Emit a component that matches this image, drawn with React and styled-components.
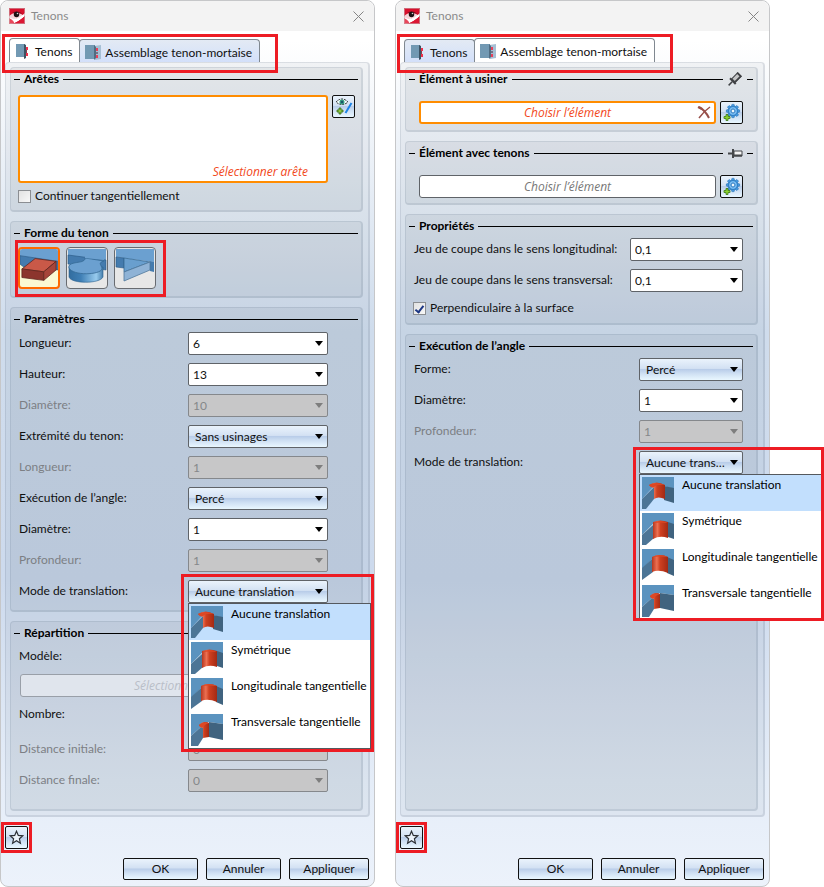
import React from 'react';
import styled, { createGlobalStyle, css } from 'styled-components';

const color = {
  text: '#101010',
  muted: '#7c7f84',
  orange: '#ff8c00',
  prompt: '#f2481b',
  callout: '#ed1c24',
  border: '#5f6368',
};

const glossy = 'linear-gradient(#eaf3fc, #d3e1f3 45%, #b9cde9 50%, #cfe0f3 70%, #e9f7ff)';
const italicFont = "'Open Sans', 'Noto Sans', sans-serif";

const GlobalStyle = createGlobalStyle`
  *, *::before, *::after { box-sizing: border-box; }

  body {
    margin: 0;
    background: #fff;
    color: ${color.text};
    font-family: Lato, 'Open Sans', sans-serif;
    font-size: 12px;
    line-height: 16px;
  }

  button, input, select, textarea {
    margin: 0;
    color: inherit;
    font: inherit;
  }
`;

const Page = styled.main`
  display: grid;
  grid-template-columns: 1fr 1fr;
  gap: 20px;
  min-height: 100vh;
  padding-right: 54px;
`;

const Window = styled.section`
  display: flex;
  flex-direction: column;
  min-width: 0;
  border: 1px solid #c6c7c9;
  border-radius: 8px;
  background: linear-gradient(#fff 40px, #cfdcec 330px, #cddaed 580px, #e5edf8 780px, #ecf2fb);
`;

const TitleBar = styled.header`
  display: flex;
  align-items: center;
  gap: 6px;
  height: 30px;
  padding: 0 8px;
  border-radius: 8px 8px 0 0;
  background: #f3f3f3;
  color: #8b8b8b;
`;

const WindowTitle = styled.h1`
  flex: 1;
  margin: 0;
  font-size: 12px;
  font-weight: 400;
`;

const CloseButton = styled.button`
  display: flex;
  padding: 2px;
  border: 0;
  background: none;
`;

/* Red frame drawn over the part being pointed out. */
const Callout = styled.span`
  position: absolute;
  z-index: 3;
  inset: ${props => props.$inset};
  border: 3px solid ${color.callout};
  pointer-events: none;
`;

const Tabs = styled.div`
  position: relative;
  display: flex;
  align-items: flex-end;
  align-self: flex-start;
  height: 24px;
  margin: 7px 0 0 8px;
`;

const Tab = styled.button`
  display: flex;
  align-items: center;
  gap: 4px;
  height: ${props => (props.$active ? 24 : 23)}px;
  padding: 3px 7px 0 5px;
  border: 1px solid #808890;
  border-bottom: 0;
  border-radius: 4px 4px 0 0;
  background: ${props => (props.$active ? '#fff' : 'linear-gradient(#e3eaf4, #d3e0fa)')};
  white-space: nowrap;

  & + & {
    margin-left: -1px;
  }
`;

const Panel = styled.div`
  display: flex;
  flex: 1;
  flex-direction: column;
  gap: 9px;
  margin: 0 4px;
  padding: 4px 5px 4px 4px;
  border: solid rgba(60, 75, 100, 0.12);
  border-width: 1px 2px 2px 1px;
  border-radius: 4px;
  background: rgba(70, 85, 110, 0.06);
`;

const GroupBox = styled.section`
  flex: ${props => (props.$fill ? '1 0 auto' : 'none')};
  padding-top: 3px;
  border: solid rgba(60, 80, 105, 0.12);
  border-width: 1px 2px 2px 1px;
  border-radius: 4px;
  background: rgba(80, 85, 100, 0.08);
`;

const GroupHeader = styled.div`
  display: flex;
  align-items: center;
  gap: 4px;
  height: 16px;
  padding: 0 3px;
`;

const GroupTitle = styled.h2`
  margin: 0;
  font-size: 12px;
  font-weight: 700;
  color: #000;
`;

const Rule = styled.span`
  flex: ${props => (props.$short ? '0 0 6px' : 1)};
  height: 1px;
  background: #000;
`;

const GroupBody = styled.div`
  display: flex;
  flex-direction: column;
  gap: ${props => props.$gap || 8}px;
  padding: ${props => props.$pad};
`;

const Row = styled.div`
  display: flex;
  align-items: center;
  gap: 4px;
  min-height: 23px;
  padding: ${props => props.$pad || 0};
`;

const FieldLabel = styled.label`
  flex: 1;
  padding: 0 0 2px 1px;
  color: ${props => (props.$disabled ? color.muted : 'inherit')};
  white-space: nowrap;
`;

const SelectWrap = styled.div`
  position: relative;
  flex: 0 0 ${props => props.$width}px;

  &::after {
    position: absolute;
    top: 9px;
    right: 5px;
    border: solid transparent;
    border-width: 5px 4px 0;
    border-top-color: ${props => (props.$disabled ? '#7e7e7e' : '#000')};
    content: '';
    pointer-events: none;
  }
`;

const StyledSelect = styled.select`
  display: block;
  width: 100%;
  height: 23px;
  padding: 1px 17px 0 4px;
  overflow: hidden;
  appearance: none;
  border: 1px solid ${color.border};
  border-radius: 2px;
  background: #fff;
  text-overflow: ellipsis;
  white-space: nowrap;

  ${props =>
    props.$glossy &&
    css`
      padding-left: 6px;
      background: ${glossy};
    `}

  &:disabled {
    border-color: #85888c;
    background: #c7c7c8;
    color: #85878a;
    opacity: 1;
  }
`;

const Popup = styled.ul`
  position: absolute;
  z-index: 2;
  top: 23px;
  left: 0;
  width: 183px;
  margin: 0;
  padding: 0;
  border: 1px solid #55595e;
  background: #fff;
  list-style: none;
`;

const PopupItem = styled.li`
  display: flex;
  gap: 8px;
  height: 36px;
  padding: 2px;
  background: ${props => (props.$selected ? '#c2dffd' : '#fff')};
  color: #000;
  white-space: nowrap;

  svg {
    flex: none;
  }
`;

const PickArea = styled.textarea`
  flex: 1;
  min-width: 0;
  height: 88px;
  padding: 67px 18px 0;
  overflow: hidden;
  resize: none;
  border: 2px solid ${color.orange};
  border-radius: 3px;
  background: #fff;
  font-family: ${italicFont};
  text-align: right;

  &::placeholder {
    color: ${color.prompt};
    font-style: italic;
    opacity: 1;
  }
`;

const PickField = styled.div`
  position: relative;
  display: flex;
  flex: 1;
  min-width: 0;
`;

const PickInput = styled.input`
  flex: 1;
  min-width: 0;
  height: 23px;
  padding: 0 4px;
  border: 1px solid ${color.border};
  border-radius: 3px;
  background: #fff;
  font-family: ${italicFont};
  text-align: center;

  &::placeholder {
    color: #777;
    font-style: italic;
    opacity: 1;
  }

  ${props =>
    props.$active &&
    css`
      border: 2px solid ${color.orange};

      &::placeholder {
        color: ${color.prompt};
      }
    `}

  &:disabled {
    border-color: #999fa8;
    background: #e0e5ed;

    &::placeholder {
      color: #b9bec8;
    }
  }
`;

const ClearButton = styled.button`
  position: absolute;
  top: 4px;
  right: 4px;
  display: flex;
  padding: 0;
  border: 0;
  background: none;
`;

const IconButton = styled.button`
  display: flex;
  flex: none;
  align-items: center;
  align-self: flex-start;
  justify-content: center;
  width: 23px;
  height: 23px;
  padding: 0;
  border: 1px solid #111;
  border-radius: 2px;
  background: ${glossy};
`;

const CheckRow = styled.label`
  display: flex;
  align-items: center;
  gap: 4px;
  min-height: 16px;
`;

const CheckBox = styled.input`
  display: grid;
  place-content: center;
  width: 13px;
  height: 13px;
  appearance: none;
  border: 1px solid #8b8e92;
  background: linear-gradient(135deg, #e2e2e2, #f8f8f8);

  &:checked::before {
    width: 5px;
    height: 9px;
    border: solid #1c3684;
    border-width: 0 2px 2px 0;
    content: '';
    transform: rotate(38deg);
  }
`;

const Shapes = styled.div`
  position: relative;
  display: flex;
  align-self: flex-start;
  gap: 6px;
`;

const ShapeButton = styled.button`
  display: flex;
  width: 42px;
  height: 42px;
  padding: 0;
  overflow: hidden;
  border: ${props => (props.$selected ? '2px solid #ff6a00' : '1px solid #686b70')};
  border-radius: 4px;
  background: ${props => (props.$selected ? '#fbf9d2' : '#e7e7e7')};

  svg {
    width: 100%;
    height: 100%;
  }
`;

const Bookmark = styled.div`
  position: relative;
  align-self: flex-start;
  margin: 9px 0 0 4px;
`;

const Actions = styled.footer`
  display: flex;
  justify-content: flex-end;
  gap: 8px;
  padding: 9px 5px 6px;
`;

const ActionButton = styled.button`
  width: ${props => (props.$wide ? 80 : 75)}px;
  height: 22px;
  padding: 0;
  border: 1px solid #111;
  border-radius: 2px;
  background: ${glossy};
`;

const AppIcon = () => (
  <svg width="16" height="16" viewBox="0 0 16 16" aria-hidden="true">
    <rect width="16" height="16" fill="#d80f2c" />
    <path d="M0 8Q3 5 7 5Q12 5 15 8Q9 10 4 12L0 10Z" fill="#f6d3d8" />
    <path d="M3 5Q8 1 14 6Q8 4 3 5Z" fill="#7d1422" />
    <circle cx="7.500" cy="6.500" r="2.700" fill="#1c1113" />
    <circle cx="8.500" cy="5.500" r=".8" fill="#d8d8d8" />
    <path d="M0 9Q3 11 5 11Q11 10 16 5V8Q11 13 3 16H0Z" fill="#fff" />
    <path d="M0 10Q6 13 5 16H0Z" fill="#e9465a" />
    <path d="M3 16Q11 13 16 8V16Z" fill="#dc1733" />
    <rect x=".5" y=".5" width="15" height="15" fill="none" stroke="#c9a5aa" opacity=".6" />
  </svg>
);

const CloseIcon = () => (
  <svg width="11" height="11" viewBox="0 0 11 11" stroke="#858585" aria-hidden="true">
    <path d="M.5.5l10 10M10.5.5l-10 10" />
  </svg>
);

const TenonIcon = () => (
  <svg width="16" height="16" viewBox="0 0 16 16" aria-hidden="true">
    <path d="M1 0h9v13H1z" fill="#7299b3" />
    <path d="M9 0l2 1v13l-2 1z" fill="#3d5263" />
    <path d="M11 3h2v3h-2zM11 9h2v3h-2z" fill="#f0304a" />
    <path d="M11 6h1v3h-1z" fill="#82414f" />
  </svg>
);

const MortiseIcon = () => (
  <svg width="16" height="16" viewBox="0 0 16 16" aria-hidden="true">
    <path d="M0 0h10v14H0z" fill="#7299b3" />
    <path d="M9 1l7-1v14l-6 1z" fill="#a6bfd4" />
    <path d="M9 0l2 2v11l-2 2z" fill="#506c82" />
    <path d="M11 3h2v3h-2zM11 10h2v3h-2z" fill="#e8405a" />
    <path d="M11 7h2v2h-2z" fill="#777287" />
  </svg>
);

const EdgeIcon = () => (
  <svg width="19" height="19" viewBox="0 0 19 19" aria-hidden="true">
    <path d="M2 5Q8-1 14 5Q8 10 2 5Z" fill="#f4ffff" stroke="#222" strokeDasharray="2 1" />
    <circle cx="8" cy="5" r="2.5" fill="#32977d" />
    <circle cx="8" cy="5" r="1" fill="#123c64" />
    <path
      d="M5 11h2v2h2v2H7v2H5v-2H3v-2h2z"
      fill="#8dc63f"
      stroke="#34691b"
      strokeWidth=".8"
    />
    <path d="M17.500 6l-6 10" stroke="#1d83e5" strokeWidth="2" />
  </svg>
);

const gearTeeth = [0, 45, 90, 135, 180, 225, 270, 315];

const GearIcon = () => (
  <svg width="19" height="19" viewBox="0 0 19 19" aria-hidden="true">
    <g fill="#4d9fe4" stroke="#2271b8" strokeWidth=".7">
      {gearTeeth.map(angle => (
        <rect
          key={angle}
          x="9.700"
          y="1.400"
          width="2.600"
          height="3"
          rx=".6"
          transform={`rotate(${angle} 11 8)`}
        />
      ))}
      <circle cx="11" cy="8" r="4.700" />
    </g>
    <circle cx="11" cy="8" r="3.200" fill="none" stroke="#8cc6f3" />
    <circle cx="11" cy="8" r="1.900" fill="#eef6fb" stroke="#2573bb" strokeWidth=".8" />
    <path
      d="M4 11.500h2v2h2v2H6v2H4v-2H2v-2h2z"
      fill="#8bd130"
      stroke="#3c7a18"
      strokeWidth=".8"
    />
  </svg>
);

const ClearIcon = () => (
  <svg width="15" height="15" viewBox="0 0 15 15" fill="none" stroke="#98504a" aria-hidden="true">
    <path d="M2 2Q8 5 12 13" strokeWidth="2" />
    <path d="M13 2Q7 6 2 13" strokeWidth="1.500" />
    <path d="M1 2l4 2" strokeWidth="2" />
  </svg>
);

const PinIcon = ({ fixed }) => (
  <svg width="16" height="16" viewBox="0 0 16 16" overflow="visible" aria-hidden="true">
    {fixed ? (
      <g stroke="#45474a">
        <path d="M1 8.500h4" strokeWidth="2" />
        <path d="M6 4v9" strokeWidth="2" />
        <path d="M7 6h8v5H7z" fill="#f4f4f4" />
        <path d="M7 10.500h8" strokeWidth="2" />
      </g>
    ) : (
      <g stroke="#3f4144" transform="rotate(-45 8 8)">
        <path d="M-1 8h5" strokeWidth="1.500" />
        <path d="M5 4v8" strokeWidth="2" />
        <path d="M6 5.500h8v5H6z" fill="#c4c5c6" />
        <path d="M6 10h8" strokeWidth="1.500" />
        <path d="M14 5v6" strokeWidth="2" />
      </g>
    )}
  </svg>
);

const StarIcon = () => (
  <svg width="15" height="15" viewBox="0 0 15 15" aria-hidden="true">
    <path
      d="M7.500 1.200l1.800 4.200 4.500.4-3.400 3 1 4.400-3.900-2.400-3.900 2.400 1-4.400-3.400-3 4.500-.4z"
      fill="#edf4fb"
      stroke="#2b2f35"
      strokeWidth="1.200"
    />
  </svg>
);

const BlockShape = () => (
  <svg viewBox="0 0 40 40" aria-hidden="true">
    <path d="M0 0h40v13L0 8z" fill="#6ba0d0" />
    <path d="M0 7l40 6v9H8L0 16z" fill="#447bae" stroke="#275581" strokeWidth=".6" />
    <path d="M16 10l22 3-13 11-23-3z" fill="#c95948" stroke="#5e241d" strokeWidth=".8" />
    <path d="M2 21l23 3v9L2 30z" fill="#8c352d" stroke="#5e241d" strokeWidth=".8" />
    <path d="M25 24l13-11v9L25 33z" fill="#a6453a" stroke="#5e241d" strokeWidth=".8" />
  </svg>
);

const RoundShape = () => (
  <svg viewBox="0 0 40 40" aria-hidden="true">
    <defs>
      <linearGradient id="round-side">
        <stop offset="0" stopColor="#326d9f" />
        <stop offset=".35" stopColor="#3f7fb5" />
        <stop offset=".8" stopColor="#98cbee" />
        <stop offset="1" stopColor="#447eac" />
      </linearGradient>
    </defs>
    <path d="M1 1h38v11L1 8z" fill="#6ba0d0" />
    <path d="M1 7l38 5v10L1 16z" fill="#447bae" stroke="#275581" strokeWidth=".6" />
    <path d="M2 19v10c2 7 31 7 34 0V19z" fill="url(#round-side)" stroke="#2b608c" strokeWidth=".6" />
    <path
      d="M18 10l19 3c-7 2-2 4-2 8-2 6-29 7-33-1-2-6 11-5 14-7 2-1 2-2 2-3z"
      fill="#6ba0d0"
      stroke="#356994"
      strokeWidth=".8"
    />
    <path d="M18 3h19v9l-19-2z" fill="#6ba0d0" />
  </svg>
);

const DovetailShape = () => (
  <svg viewBox="0 0 40 40" aria-hidden="true">
    <path d="M1 1h38v13L1 9z" fill="#6ba0d0" />
    <path d="M1 9l8 1v10l-8-1z" fill="#447bae" stroke="#275581" strokeWidth=".6" />
    <path d="M35 13l4 1v10l-4-1z" fill="#447bae" />
    <path d="M9 10l26 4L9 24z" fill="#699fce" stroke="#356994" strokeWidth=".8" />
    <path d="M9 24l26-10v8L9 33z" fill="#8fb3d6" stroke="#4f779b" strokeWidth=".8" />
  </svg>
);

const notches = {
  none: {
    top: 'M0 0H32V12L22 9H12L0 22Z',
    left: 'M0 22L12 10V22L4 32H0Z',
    right: 'M22 9l10 2v15l-10-3z',
    pin: 'M7 8Q14 3 23 8V22Q16 19 12 22V11Q9 11 7 8Z',
    cap: 'M7 8Q14 4 23 8Q15 7 12 10Q9 11 7 8Z',
  },
  symmetric: {
    top: 'M0 0H32V12L26 10H12L0 22Z',
    left: 'M0 22L12 11V25L4 32H0Z',
    right: 'M26 9l6 2v15l-6-2z',
    pin: 'M11 9Q18 6 26 9V25Q18 22 11 26Z',
    cap: 'M11 10Q18 6 26 10Q18 9 11 10Z',
  },
  longitudinal: {
    top: 'M0 0H32V12L25 9H11L0 20Z',
    left: 'M0 19L11 9V23L0 31Z',
    right: 'M25 8l7 3v16l-7-3z',
    pin: 'M10 8Q18 4 26 8V24Q17 20 10 23Z',
    cap: 'M10 8Q18 4 26 8Q18 7 10 8Z',
  },
  transversal: {
    top: 'M0 0H32V10L18 8L12 11L0 22Z',
    left: 'M0 22L12 11V24L7 32H0Z',
    right: 'M18 8l14 2v16l-14-3z',
    pin: 'M8 11Q12 6 18 9V23L12 24V14Q9 14 8 11Z',
    cap: 'M8 11Q12 7 18 9Q14 10 12 13Q9 14 8 11Z',
  },
};

const NotchIcon = ({ kind }) => {
  const { top, left, right, pin, cap } = notches[kind];

  return (
    <svg width="32" height="32" viewBox="0 0 32 32" aria-hidden="true">
      <defs>
        <linearGradient id="notch-pin">
          <stop offset="0" stopColor="#b8371f" />
          <stop offset=".3" stopColor="#ec7052" />
          <stop offset=".5" stopColor="#cf4020" />
          <stop offset="1" stopColor="#a32a14" />
        </linearGradient>
      </defs>
      <path d={top} fill="#5b93bf" />
      <path d={left} fill="#4c7596" />
      <path d={right} fill="#40637f" />
      <path d={pin} fill="url(#notch-pin)" />
      <path d={cap} fill="#dd4825" />
    </svg>
  );
};

const translationModes = [
  { kind: 'none', label: 'Aucune translation' },
  { kind: 'symmetric', label: 'Symétrique' },
  { kind: 'longitudinal', label: 'Longitudinale tangentielle' },
  { kind: 'transversal', label: 'Transversale tangentielle' },
];

const Group = ({ title, pin, fill, pad, gap, children }) => (
  <GroupBox $fill={fill}>
    <GroupHeader>
      <Rule $short />
      <GroupTitle>{title}</GroupTitle>
      <Rule />
      {pin && <PinIcon fixed={pin === 'fixed'} />}
      {pin && <Rule $short />}
    </GroupHeader>
    <GroupBody $pad={pad} $gap={gap}>
      {children}
    </GroupBody>
  </GroupBox>
);

const SelectRow = ({ id, label, value, width, disabled, glossy: isGlossy, pad, children }) => (
  <Row $pad={pad}>
    <FieldLabel htmlFor={id} $disabled={disabled}>
      {label}
    </FieldLabel>
    <SelectWrap $width={width} $disabled={disabled}>
      <StyledSelect id={id} disabled={disabled} $glossy={isGlossy}>
        <option>{value}</option>
      </StyledSelect>
      {children}
    </SelectWrap>
  </Row>
);

const TranslationRow = ({ id, width, calloutInset }) => (
  <SelectRow
    id={id}
    label="Mode de translation:"
    value={translationModes[0].label}
    width={width}
    glossy
  >
    <Popup role="listbox" aria-label="Mode de translation">
      {translationModes.map(({ kind, label }, index) => (
        <PopupItem key={kind} role="option" aria-selected={index === 0} $selected={index === 0}>
          <NotchIcon kind={kind} />
          {label}
        </PopupItem>
      ))}
    </Popup>
    <Callout $inset={calloutInset} />
  </SelectRow>
);

const Dialog = ({ activeTab, children }) => (
  <Window>
    <TitleBar>
      <AppIcon />
      <WindowTitle>Tenons</WindowTitle>
      <CloseButton aria-label="Fermer">
        <CloseIcon />
      </CloseButton>
    </TitleBar>
    <Tabs role="tablist">
      <Tab role="tab" aria-selected={activeTab === 0} $active={activeTab === 0}>
        <TenonIcon />
        Tenons
      </Tab>
      <Tab role="tab" aria-selected={activeTab === 1} $active={activeTab === 1}>
        <MortiseIcon />
        Assemblage tenon-mortaise
      </Tab>
      <Callout $inset="-4px -18px -11px -7px" />
    </Tabs>
    <Panel>{children}</Panel>
    <Bookmark>
      <IconButton aria-label="Favoris">
        <StarIcon />
      </IconButton>
      <Callout $inset="-4px" />
    </Bookmark>
    <Actions>
      <ActionButton>OK</ActionButton>
      <ActionButton>Annuler</ActionButton>
      <ActionButton $wide>Appliquer</ActionButton>
    </Actions>
  </Window>
);

const parameters = [
  { id: 'length', label: 'Longueur:', value: '6' },
  { id: 'height', label: 'Hauteur:', value: '13' },
  { id: 'diameter', label: 'Diamètre:', value: '10', disabled: true },
  { id: 'tenon-end', label: 'Extrémité du tenon:', value: 'Sans usinages', glossy: true },
  { id: 'end-length', label: 'Longueur:', value: '1', disabled: true },
  { id: 'corner', label: 'Exécution de l’angle:', value: 'Percé', glossy: true },
  { id: 'corner-diameter', label: 'Diamètre:', value: '1' },
  { id: 'corner-depth', label: 'Profondeur:', value: '1', disabled: true },
];

const TenonDialog = () => (
  <Dialog activeTab={0}>
    <Group title="Arêtes" pad="8px 6px 6px 7px" gap={5}>
      <Row>
        <PickArea aria-label="Arêtes" placeholder="Sélectionner arête" />
        <IconButton aria-label="Ajouter une arête">
          <EdgeIcon />
        </IconButton>
      </Row>
      <CheckRow>
        <CheckBox type="checkbox" />
        Continuer tangentiellement
      </CheckRow>
    </Group>
    <Group title="Forme du tenon" pad="6px 6px 7px 7px">
      <Shapes>
        <ShapeButton aria-label="Rectangulaire" $selected>
          <BlockShape />
        </ShapeButton>
        <ShapeButton aria-label="Arrondi">
          <RoundShape />
        </ShapeButton>
        <ShapeButton aria-label="Queue d’aronde">
          <DovetailShape />
        </ShapeButton>
        <Callout $inset="-7px -10px -8px -3px" />
      </Shapes>
    </Group>
    <Group title="Paramètres" pad="5px 33px 7px 7px">
      {parameters.map(parameter => (
        <SelectRow key={parameter.id} width={140} {...parameter} />
      ))}
      <TranslationRow id="translation" width={140} calloutInset="-6px -46px -149px -7px" />
    </Group>
    <Group title="Répartition" pad="4px 6px 16px 7px" gap={6} fill>
      <Row>
        <FieldLabel htmlFor="model">Modèle:</FieldLabel>
      </Row>
      <Row $pad="0 0 0 2px">
        <PickInput id="model" placeholder="Sélectionner modèle" disabled />
      </Row>
      <SelectRow id="count" label="Nombre:" value="1" width={140} pad="0 27px 0 0" />
      <SelectRow
        id="start-distance"
        label="Distance initiale:"
        value="0"
        width={140}
        pad="6px 27px 0 0"
        disabled
      />
      <SelectRow
        id="end-distance"
        label="Distance finale:"
        value="0"
        width={140}
        pad="2px 27px 0 0"
        disabled
      />
    </Group>
  </Dialog>
);

const MortiseDialog = () => (
  <Dialog activeTab={1}>
    <Group title="Élément à usiner" pin="loose" pad="14px 13px 6px">
      <Row>
        <PickField>
          <PickInput aria-label="Élément à usiner" placeholder="Choisir l’élément" $active />
          <ClearButton aria-label="Effacer">
            <ClearIcon />
          </ClearButton>
        </PickField>
        <IconButton aria-label="Ajouter l’élément à usiner">
          <GearIcon />
        </IconButton>
      </Row>
    </Group>
    <Group title="Élément avec tenons" pin="fixed" pad="14px 13px 5px">
      <Row>
        <PickField>
          <PickInput aria-label="Élément avec tenons" placeholder="Choisir l’élément" />
        </PickField>
        <IconButton aria-label="Ajouter l’élément avec tenons">
          <GearIcon />
        </IconButton>
      </Row>
    </Group>
    <Group title="Propriétés" pad="4px 13px 7px 7px">
      <SelectRow
        id="lengthwise"
        label="Jeu de coupe dans le sens longitudinal:"
        value="0,1"
        width={113}
      />
      <SelectRow
        id="crosswise"
        label="Jeu de coupe dans le sens transversal:"
        value="0,1"
        width={113}
      />
      <CheckRow>
        <CheckBox type="checkbox" defaultChecked />
        Perpendiculaire à la surface
      </CheckRow>
    </Group>
    <Group title="Exécution de l’angle" pad="4px 13px 7px 7px" fill>
      <SelectRow id="shape" label="Forme:" value="Percé" width={104} glossy />
      <SelectRow id="hole-diameter" label="Diamètre:" value="1" width={104} />
      <SelectRow id="hole-depth" label="Profondeur:" value="1" width={104} disabled />
      <TranslationRow id="mortise-translation" width={104} calloutInset="-4px -81px -147px -6px" />
    </Group>
  </Dialog>
);

const App = () => (
  <>
    <GlobalStyle />
    <Page>
      <TenonDialog />
      <MortiseDialog />
    </Page>
  </>
);

export default App;
